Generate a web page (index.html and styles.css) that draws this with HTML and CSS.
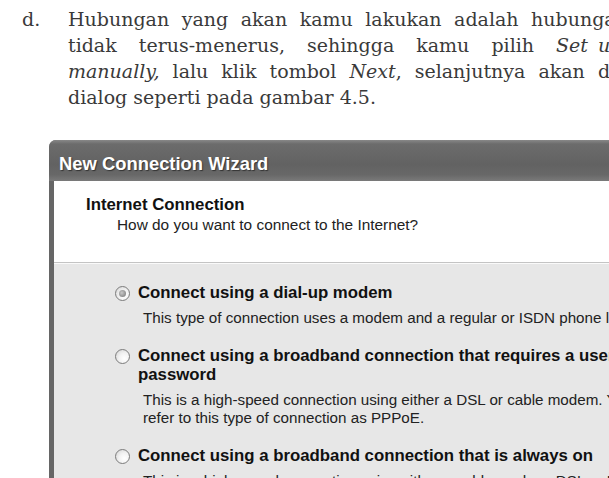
FILE: index.html
```html
<!DOCTYPE html>
<html lang="id">
<head>
    <meta charset="UTF-8">
    <meta name="viewport" content="width=device-width, initial-scale=1.0">
    <title>Langkah d - New Connection Wizard</title>
    <link rel="stylesheet" href="styles.css">
</head>
<body>
    <!-- Step d. of the dial-up setup -->
    <div class="step">
        <span class="step-label">d.</span>
        <div class="step-text">
            <span class="line line-1">Hubungan yang akan kamu lakukan adalah hubungan yang</span>
            <span class="line line-2">tidak terus-menerus, sehingga kamu pilih <i class="term">Set up my connection</i></span>
            <span class="line line-3"><i>manually,</i> lalu klik tombol <i>Next</i>, selanjutnya akan ditampilkan kotak</span>
            <span class="line">dialog seperti pada gambar 4.5.</span>
        </div>
    </div>

    <!-- Gambar 4.5 -->
    <div class="figure">
        <div class="wizard">
            <div class="titlebar">New Connection Wizard</div>
            <div class="client">
                <div class="wizard-head">
                    <div class="head-title">Internet Connection</div>
                    <div class="head-sub">How do you want to connect to the Internet?</div>
                </div>
                <div class="wizard-body">
                    <label class="option">
                        <input type="radio" name="conn" value="dialup" checked>
                        <span class="radio"></span>
                        <span class="option-text">
                            <span class="option-title">Connect using a dial-up modem</span>
                            <span class="option-desc">This type of connection uses a modem and a regular or ISDN phone line.</span>
                        </span>
                    </label>
                    <label class="option">
                        <input type="radio" name="conn" value="pppoe">
                        <span class="radio"></span>
                        <span class="option-text">
                            <span class="option-title">Connect using a broadband connection that requires a user name and password</span>
                            <span class="option-desc">This is a high-speed connection using either a DSL or cable modem. Your ISP may refer to this type of connection as PPPoE.</span>
                        </span>
                    </label>
                    <label class="option">
                        <input type="radio" name="conn" value="always">
                        <span class="radio"></span>
                        <span class="option-text">
                            <span class="option-title">Connect using a broadband connection that is always on</span>
                            <span class="option-desc">This is a high-speed connection using either a cable modem, DSL or LAN connection. It is always active, and doesn't require you to sign in.</span>
                        </span>
                    </label>
                </div>
            </div>
        </div>
    </div>
</body>
</html>
```

FILE: styles.css
```css
html, body {
    margin: 0;
    padding: 0;
    overflow: hidden;
    background-color: #fff;
}
body {
    width: 609px;
    height: 478px;
    font-family: "Liberation Sans", Arial, sans-serif;
}

/* book paragraph */
.step {
    display: flex;
    padding: 6px 0 0 22px;
    font-family: "DejaVu Serif", "Liberation Serif", serif;
    font-size: 19px;
    line-height: 26px;
    color: #3a3a3a;
}
.step-label {
    flex: 0 0 46px;
}
.step-text {
    flex: 0 0 760px;
}
.step-text .line {
    display: block;
    white-space: nowrap;
}
/* the printed column is justified, so each line has its own spacing */
.step-text .line-1 {
    word-spacing: 6.5px;
}
.step-text .line-2 {
    word-spacing: 16px;
}
.step-text .line-2 .term {
    word-spacing: 4px;
}
.step-text .line-3 {
    word-spacing: 7px;
}

/* wizard window */
.figure {
    margin-top: 30px;
    padding-left: 49px;
}
.wizard {
    width: 740px;
    background-color: #666;
    border-radius: 7px 7px 0 0;
}
.titlebar {
    height: 41px;
    padding: 6px 0 0 10px;
    border-radius: 7px 7px 0 0;
    background: linear-gradient(#888 0, #6c6c6c 4px, #626262 60%, #686868 85%, #7a7a7a 100%);
    color: #fff;
    font-weight: bold;
    font-size: 18.4px;
    line-height: 35px;
    text-shadow: 1px 1px 1px #333;
    box-sizing: border-box;
}
.client {
    margin-left: 5px;
    background-color: #e7e7e7;
}
.wizard-head {
    height: 82px;
    padding: 14px 0 0 32px;
    box-sizing: border-box;
    background-color: #fff;
    border-bottom: 1px solid #c4c4c4;
    box-shadow: 0 1px 0 #fafafa;
    color: #111;
}
.head-title {
    font-weight: bold;
    font-size: 16.8px;
    line-height: 20px;
}
.head-sub {
    padding-left: 31px;
    font-size: 15.4px;
    line-height: 20px;
    color: #222;
}
.wizard-body {
    padding: 20px 0 0 61px;
    height: 300px;
    color: #111;
}
.option {
    display: flex;
    margin-bottom: 19px;
}
.option input {
    display: none;
}
.radio {
    flex: 0 0 auto;
    width: 13px;
    height: 13px;
    margin: 3px 8px 0 0;
    border: 1px solid #7c7c7c;
    border-radius: 50%;
    background: radial-gradient(circle at 65% 65%, #fff 0, #f2f2f2 45%, #d0d0d0 100%);
    position: relative;
}
.option input:checked + .radio::after {
    content: "";
    position: absolute;
    left: 3px;
    top: 3px;
    width: 7px;
    height: 7px;
    border-radius: 50%;
    background: radial-gradient(circle at 40% 40%, #c8c8c8 0, #8c8c8c 70%);
}
.option-text {
    width: 590px;
}
.option-title {
    display: block;
    font-weight: bold;
    font-size: 16.8px;
    line-height: 19px;
}
.option-desc {
    display: block;
    margin-top: 7px;
    padding: 0 20px 0 5px;
    font-size: 15.2px;
    line-height: 18px;
    color: #222;
}
```
